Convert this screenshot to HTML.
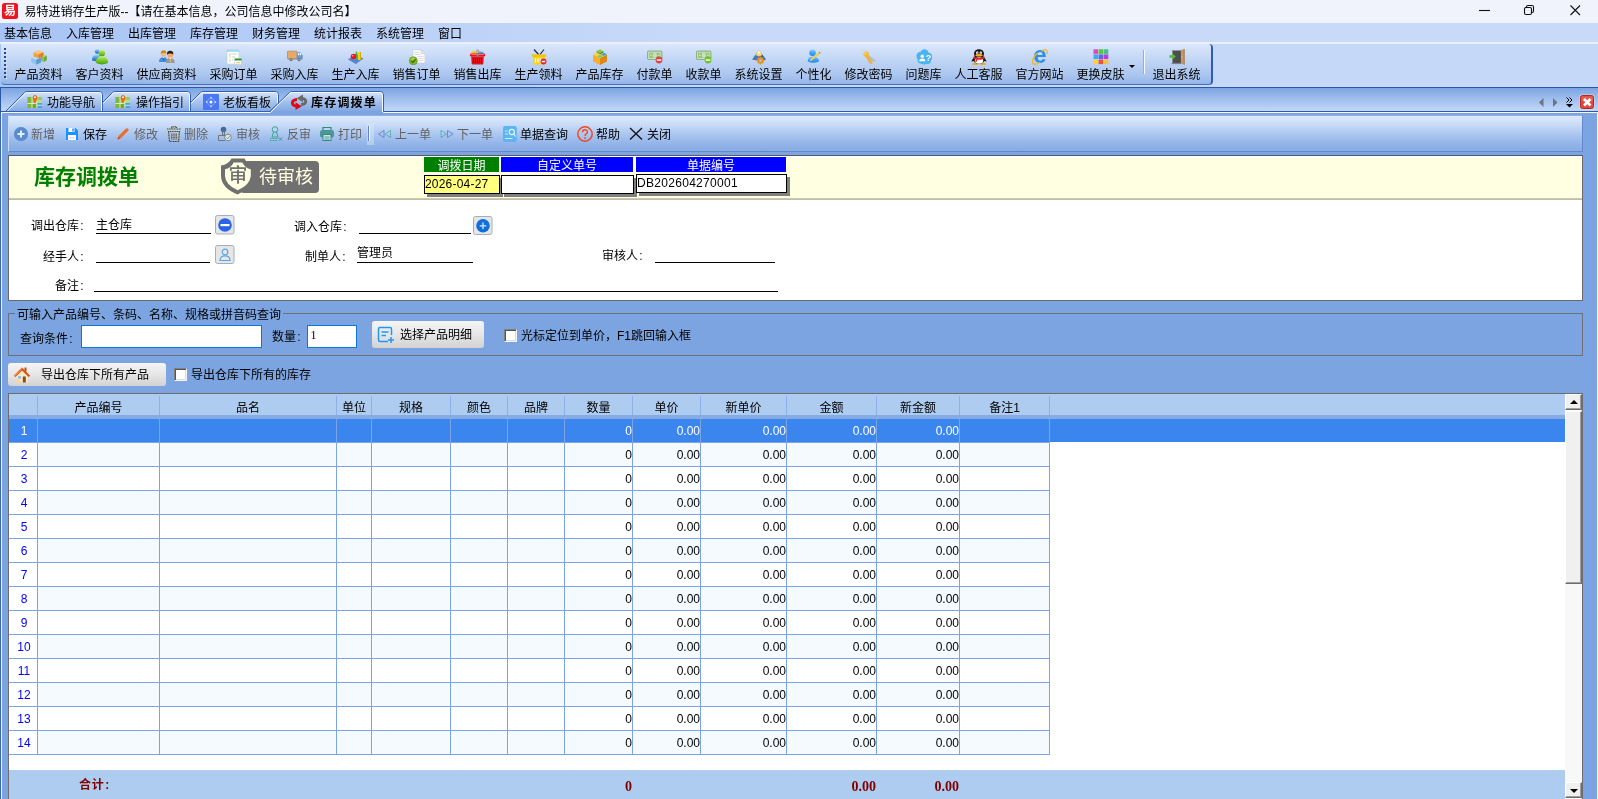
<!DOCTYPE html>
<html lang="zh-CN"><head><meta charset="utf-8"><title>易特进销存生产版</title>
<style>
html,body{margin:0;padding:0}
body{width:1598px;height:799px;overflow:hidden;position:relative;background:#7ca4e0;font:12px/12px "Liberation Sans","Noto Sans CJK SC",sans-serif;color:#000}
div,span{box-sizing:border-box}
.abs{position:absolute}
.t{position:absolute;white-space:nowrap;line-height:14px;height:14px;margin-top:1px}
.cl{display:inline-block;width:6px;text-align:center}
.c{text-align:center}
.r{text-align:right}
#titlebar{left:0;top:0;width:1598px;height:23px;background:#f0f3fb}
#menubar{left:0;top:23px;width:1598px;height:20px;background:linear-gradient(to right,#a8c4f5 0,#c8daf8 44%,#c8daf8 100%);border-bottom:1px solid #eaf1fd}
#toolrow{left:0;top:43px;width:1598px;height:44px;background:linear-gradient(to right,#a8c4f5 0,#c5d8f7 44%,#c5d8f7 100%);border-top:1px solid #e9f0fc}
#toolbar{left:1px;top:44px;width:1212px;height:41px;border-radius:0 4px 4px 4px;background:linear-gradient(#dbe7fb,#c4d8f6 35%,#a9c4ee 80%,#94b4e8);border-right:2px solid #2f5cb8;border-bottom:1px solid #4a72bc}
#tabstrip{left:0;top:87px;width:1598px;height:26px;background:linear-gradient(#2d56a5 0,#2d56a5 1px,#7ca4e1 1px,#9fbeed 45%,#bcd3f5 85%,#c8dcf9)}
.tb{position:absolute;top:68px;height:14px;line-height:14px;text-align:center;white-space:nowrap}
.ic{position:absolute}
.g{color:#626262}
</style></head><body><div id="root" style="position:absolute;left:0;top:0;width:1598px;height:799px;will-change:transform">

<div id="titlebar" class="abs"></div>
<div class="abs" style="left:2px;top:3px;width:16px;height:16px;border-radius:2.5px;background:#f0141e;color:#fff;font-size:12px;line-height:17px;text-align:center;font-weight:bold">易</div>
<div class="t" style="left:24.5px;top:4px">易特进销存生产版--【请在基本信息，公司信息中修改公司名】</div>
<svg class="abs" style="left:1470px;top:0" width="128" height="23" viewBox="0 0 128 23"><g stroke="#111" stroke-width="1.1" fill="none"><path d="M9 10.5H20"/><rect x="54.5" y="7.5" width="7" height="7" rx="1.5"/><path d="M56.5 7.5V6.8Q56.5 5.5 58 5.5H62Q63.5 5.5 63.5 7V11Q63.5 12.5 62 12.5H61.5"/><path d="M100.500 5.500L110 15M110 5.500L100.500 15"/></g></svg>
<div id="menubar" class="abs"></div>
<div class="t" style="left:4px;top:26px">基本信息</div>
<div class="t" style="left:66px;top:26px">入库管理</div>
<div class="t" style="left:128px;top:26px">出库管理</div>
<div class="t" style="left:190px;top:26px">库存管理</div>
<div class="t" style="left:252px;top:26px">财务管理</div>
<div class="t" style="left:314px;top:26px">统计报表</div>
<div class="t" style="left:376px;top:26px">系统管理</div>
<div class="t" style="left:438px;top:26px">窗口</div>
<div id="toolrow" class="abs"></div><div id="toolbar" class="abs"></div>
<div class="abs" style="left:4px;top:48px;width:2px;height:31px;background:repeating-linear-gradient(#27468c 0,#27468c 2px,transparent 2px,transparent 4px)"></div><div class="abs" style="left:5px;top:49px;width:2px;height:31px;background:repeating-linear-gradient(transparent 0,transparent 1px,#f2f7fe 1px,#f2f7fe 2px,transparent 2px,transparent 4px);clip-path:inset(0 0 0 1px)"></div>
<div class="tb" style="left:8px;width:61px">产品资料</div>
<div class="tb" style="left:69px;width:61px">客户资料</div>
<div class="tb" style="left:130px;width:73px">供应商资料</div>
<div class="tb" style="left:203px;width:61px">采购订单</div>
<div class="tb" style="left:264px;width:61px">采购入库</div>
<div class="tb" style="left:325px;width:61px">生产入库</div>
<div class="tb" style="left:386px;width:61px">销售订单</div>
<div class="tb" style="left:447px;width:61px">销售出库</div>
<div class="tb" style="left:508px;width:61px">生产领料</div>
<div class="tb" style="left:569px;width:61px">产品库存</div>
<div class="tb" style="left:630px;width:49px">付款单</div>
<div class="tb" style="left:679px;width:49px">收款单</div>
<div class="tb" style="left:728px;width:61px">系统设置</div>
<div class="tb" style="left:789px;width:49px">个性化</div>
<div class="tb" style="left:838px;width:61px">修改密码</div>
<div class="tb" style="left:899px;width:49px">问题库</div>
<div class="tb" style="left:948px;width:61px">人工客服</div>
<div class="tb" style="left:1009px;width:61px">官方网站</div>
<div class="tb" style="left:1070px;width:61px">更换皮肤</div>
<div class="abs" style="left:1129px;top:65px;width:0;height:0;border-left:3px solid transparent;border-right:3px solid transparent;border-top:3px solid #000"></div>
<div class="abs" style="left:1143px;top:50px;width:1px;height:24px;background:#8fade2"></div><div class="abs" style="left:1144px;top:50px;width:1px;height:24px;background:#f6f9fe"></div>
<div class="tb" style="left:1146px;width:61px">退出系统</div>
<svg width="0" height="0" style="position:absolute"><defs><linearGradient id="gGrn" x1="0" y1="0" x2="0" y2="1"><stop offset="0" stop-color="#c4f07e"/><stop offset="0.45" stop-color="#7ed02a"/><stop offset="1" stop-color="#4a9c10"/></linearGradient><linearGradient id="gBlu" x1="0" y1="0" x2="0" y2="1"><stop offset="0" stop-color="#a8d8fc"/><stop offset="0.5" stop-color="#4a94e4"/><stop offset="1" stop-color="#2a68c4"/></linearGradient><linearGradient id="gBl2" x1="0" y1="0" x2="0" y2="1"><stop offset="0" stop-color="#8cd0ff"/><stop offset="0.5" stop-color="#40a4f8"/><stop offset="1" stop-color="#2a88e4"/></linearGradient></defs></svg>
<svg class="ic" style="left:31px;top:49px" width="16" height="16" viewBox="0 0 16 16"><path d="M10 7L12.800 8V13L10 12Z" fill="#8cc152"/><path d="M12.800 8L15.800 6.500V11.200L12.800 13Z" fill="#6ea637"/><path d="M10 7L13 5.500L15.800 6.500L12.800 8Z" fill="#b4dc86"/>
<path d="M0.300 8.500L5.200 10.500V15.800L0.300 13.300Z" fill="#8cc4f0"/><path d="M5.200 10.500L10 8.500V13.500L5.200 15.800Z" fill="#5a9bd8"/><path d="M0.300 8.500L5 6.800L10 8.500L5.200 10.500Z" fill="#c0e0f8"/>
<path d="M2.500 3.200L7.500 5.200V9.500L2.500 7.500Z" fill="#f5a040"/><path d="M7.500 5.200L12.500 3V7.300L7.500 9.500Z" fill="#e07f1c"/><path d="M2.500 3.200L7.500 1L12.500 3L7.500 5.200Z" fill="#fac27a"/></svg>
<svg class="ic" style="left:92px;top:49px" width="16" height="16" viewBox="0 0 16 16"><circle cx="5.200" cy="2.600" r="2.400" fill="url(#gBlu)"/><path d="M0 11.500C0 7 2 5.500 5 5.500S8 7 8 11.500Q4 13 0 11.500Z" fill="url(#gBlu)"/>
<circle cx="9.800" cy="4.300" r="3.200" fill="url(#gGrn)"/><path d="M3.800 14C3.800 9.500 6.500 7.300 9.900 7.300S16.100 9.500 16.100 14Q10 16.800 3.800 14Z" fill="url(#gGrn)"/></svg>
<svg class="ic" style="left:159px;top:49px" width="16" height="16" viewBox="0 0 16 16"><circle cx="4.600" cy="5" r="2.700" fill="#f8b878"/><path d="M1.800 4.800C1.600 2 3 1.300 4.600 1.300S7.400 2 7.400 4.300C6 3.500 3.500 3.400 1.800 4.800Z" fill="#c48a22"/><path d="M-0.100 13C-0.100 10 2 8 4.600 8S8.200 9.500 8.200 13Z" fill="#3f8ee0"/><path d="M4.600 8.200L3.900 10L4.600 12.500L5.300 10Z" fill="#d22"/><path d="M3.600 8.100L4.600 9.200L5.600 8.100Z" fill="#fff"/>
<circle cx="11.200" cy="5.700" r="3" fill="#f9a868"/><path d="M8.100 5.500C7.900 2.500 9.500 1.800 11.200 1.800S14.500 2.500 14.300 5.500C13 4 9.500 4 8.100 5.500Z" fill="#1e1e1e"/><path d="M6.800 14C6.800 10.800 8.700 9 11.300 9S15.800 10.800 15.800 14Z" fill="#9a9a9a"/><path d="M10.200 9.100L11.300 10.500L12.400 9.100Z" fill="#fff"/><path d="M11.300 10.200L10.700 12L11.300 14L11.900 12Z" fill="#f0cc1e"/></svg>
<svg class="ic" style="left:226px;top:49px" width="16" height="16" viewBox="0 0 16 16"><rect x="1" y="0.800" width="12" height="14.200" fill="#fdfeff" stroke="#c2d0e0" stroke-width="0.700"/><rect x="1" y="0.800" width="12" height="2" fill="#9fd8f2"/><path d="M3 5H5.500M3 8H5M3 11H5" stroke="#f4cf8a" stroke-width="1"/><path d="M6.500 5H10.500M6 8H9.500M6 11H7.500" stroke="#b4e3b6" stroke-width="1"/><path d="M3 6.500H4.500M3 12.500H4.500" stroke="#a9dcf2" stroke-width="0.800"/>
<rect x="8.800" y="9.600" width="6.800" height="6" fill="#fff" stroke="#b8b8b8" stroke-width="0.500"/><rect x="8.800" y="9.600" width="6.800" height="1.900" fill="#2a9a2a"/><path d="M10 13.700H14.500" stroke="#e4c87a" stroke-width="1.200"/></svg>
<svg class="ic" style="left:287px;top:49px" width="16" height="16" viewBox="0 0 16 16"><rect x="0.500" y="2.200" width="9.300" height="7.400" rx="0.500" fill="#f0b070" stroke="#a07850" stroke-width="0.600"/><path d="M1 4H9.300M1 6H9.300M1 8H9.300" stroke="#dc9a58" stroke-width="0.600"/><path d="M9.800 3.300H13.200L15.600 6.300V10H9.800Z" fill="#5aa0e4"/><rect x="10.800" y="4.200" width="1.300" height="2" fill="#fff"/><rect x="12.700" y="4.200" width="1.300" height="2" fill="#fff"/><rect x="0.500" y="9.600" width="15" height="0.900" fill="#8a8a8a"/><circle cx="4" cy="10.700" r="1.500" fill="#6a6a6a"/><circle cx="4" cy="10.700" r="0.600" fill="#c8c8c8"/><circle cx="12" cy="10.700" r="1.500" fill="#6a6a6a"/><circle cx="12" cy="10.700" r="0.600" fill="#c8c8c8"/><rect x="14.600" y="7.500" width="1" height="1" fill="#f0501e"/></svg>
<svg class="ic" style="left:348px;top:49px" width="16" height="16" viewBox="0 0 16 16"><path d="M0.500 10L7.500 6L15.500 9.500L8.500 14.500Z" fill="#4f86d8"/><path d="M0.500 10L8.500 14.500L8.500 15.300L0.500 10.800Z" fill="#3567b8"/><path d="M8 1.500L10 6V10H6.500Z" fill="#4caf50"/><rect x="10" y="3" width="3" height="8" fill="#f2d01e"/><rect x="12.200" y="3" width="0.800" height="8" fill="#c9a800"/><circle cx="5.500" cy="7.500" r="2.800" fill="#e8181e"/><circle cx="4.700" cy="6.600" r="0.900" fill="#ff8a8a"/></svg>
<svg class="ic" style="left:409px;top:49px" width="16" height="16" viewBox="0 0 16 16"><path d="M3.800 0.800H12L16 4.800V14H3.800Z" fill="#fbfbfb" stroke="#c0c5cc" stroke-width="0.600"/><path d="M12 0.800V4.800H16Z" fill="#e2e5ea" stroke="#c0c5cc" stroke-width="0.400"/><path d="M5.500 3.500H10.500M5.500 5.500H11M9 7.500H14.500M9 9.500H14.500M9.500 11.500H14.500" stroke="#d0d4da" stroke-width="0.800"/><circle cx="4.300" cy="11.800" r="4" fill="#86bc2a" stroke="#5e8e18" stroke-width="0.700"/><ellipse cx="4" cy="10" rx="2.600" ry="1.500" fill="#a8d84e" opacity="0.700"/><path d="M2.200 11.800L3.900 13.500L6.600 10.200" stroke="#356e08" stroke-width="1.400" fill="none"/></svg>
<svg class="ic" style="left:470px;top:49px" width="16" height="16" viewBox="0 0 16 16"><path d="M1 5.500L2 2.500Q4 1.500 6.500 2.500V5.500Z" fill="#f4c81e"/><path d="M8.600 5.500V2.800Q11 2 13 3L14 5.500Z" fill="#3fa8ea"/><rect x="6.600" y="0.200" width="2" height="7.800" rx="1" fill="#8a8a8a"/><rect x="7.100" y="0.500" width="0.700" height="7" fill="#d0d0d0"/><rect x="-0.200" y="4.600" width="15.400" height="3" rx="1.400" fill="#e8141e"/><rect x="0.800" y="5" width="13.400" height="0.900" rx="0.400" fill="#ff7070"/><path d="M1.200 7.400H13.800L13.300 14.800Q13.200 15.500 12.500 15.500H2.500Q1.800 15.500 1.700 14.800Z" fill="#e0121c"/><path d="M3.500 9V14M5.500 9V14M7.500 9V14M9.500 9V14M11.500 9V14" stroke="#8e060c" stroke-width="0.700"/><rect x="6.600" y="4.600" width="2" height="3.200" rx="0.800" fill="#8a8a8a"/></svg>
<svg class="ic" style="left:531px;top:49px" width="16" height="16" viewBox="0 0 16 16"><path d="M3 0.500L7.500 5.500M13 0.500L9 5.500" stroke="#1e2a3a" stroke-width="1.200"/><path d="M0.500 5.500H15.500L14.500 8H1.500Z" fill="#f5c400"/><path d="M2 8H14L13.500 15.500H2.500Z" fill="#f8d21a"/><path d="M4.500 9.500V13.500M7 9.500V13.500M9.500 9.500V13.500" stroke="#fff" stroke-width="1.300"/><circle cx="12.500" cy="12.500" r="3" fill="#e8282e"/><rect x="10.800" y="11.800" width="3.400" height="1.400" fill="#fff"/></svg>
<svg class="ic" style="left:592px;top:49px" width="16" height="16" viewBox="0 0 16 16"><path d="M1 5.500L8 9V16L1 12.500Z" fill="#f5ad32"/><path d="M8 9L15 5.500V12.500L8 16Z" fill="#dc8a14"/><path d="M1 5.500L8 2L15 5.500L8 9Z" fill="#f8cc68"/><path d="M4.500 2L8 0.200L11.500 2L8 3.800Z" fill="#8ad04a"/><path d="M4.500 2V3.500L8 5.300V3.800Z" fill="#62a82a"/><path d="M8 3.800V5.300L11.500 3.500V2Z" fill="#4e9420"/><path d="M8.800 5.500L12 3.800L15 5.300L11.800 7Z" fill="#3fa0ec"/><path d="M1.200 5.300L4.300 3.700L7.300 5.200L4.200 6.800Z" fill="#fad23c"/><path d="M4.800 7.300L8 5.700L11 7.200L8 8.800Z" fill="#7ed04a"/></svg>
<svg class="ic" style="left:647px;top:49px" width="16" height="16" viewBox="0 0 16 16"><rect x="0.500" y="2" width="14.500" height="8.500" rx="1" fill="#98c282" stroke="#7aa867" stroke-width="0.700"/><rect x="1.700" y="3.200" width="12.100" height="6.100" fill="none" stroke="#d9ecd0" stroke-width="0.800"/><ellipse cx="7.800" cy="6.200" rx="2.200" ry="2.500" fill="#c9e2bc"/><circle cx="3.800" cy="6.200" r="0.800" fill="#d9ecd0"/><circle cx="11.800" cy="6.200" r="0.800" fill="#d9ecd0"/><circle cx="12" cy="11" r="3.400" fill="#e84040"/><rect x="9.800" y="10.300" width="4.400" height="1.500" fill="#fff"/></svg>
<svg class="ic" style="left:696px;top:49px" width="16" height="16" viewBox="0 0 16 16"><rect x="0.500" y="2" width="14.500" height="8.500" rx="1" fill="#98c282" stroke="#7aa867" stroke-width="0.700"/><rect x="1.700" y="3.200" width="12.100" height="6.100" fill="none" stroke="#d9ecd0" stroke-width="0.800"/><ellipse cx="7.800" cy="6.200" rx="2.200" ry="2.500" fill="#c9e2bc"/><circle cx="3.800" cy="6.200" r="0.800" fill="#d9ecd0"/><circle cx="11.800" cy="6.200" r="0.800" fill="#d9ecd0"/><circle cx="12" cy="11" r="3.400" fill="#74c020"/><rect x="9.800" y="10.300" width="4.400" height="1.500" fill="#fff"/></svg>
<svg class="ic" style="left:751px;top:49px" width="16" height="16" viewBox="0 0 16 16"><path d="M8 1L1 10.500L8 12Z" fill="#4a78c0"/><path d="M8 1L15 10.500L8 12Z" fill="#3462a8"/><path d="M8 1L4.500 6L8 7.500L11.500 6Z" fill="#f5d66a"/><path d="M8 1L6 4L8 5L10 4Z" fill="#fff3c0"/><circle cx="9.500" cy="11.500" r="3" fill="#e8921e"/><path d="M9.500 7.500V15.500M5.500 11.500H13.500M6.700 8.700L12.300 14.300M12.300 8.700L6.700 14.300" stroke="#e8921e" stroke-width="1.600"/><circle cx="9.500" cy="11.500" r="1.200" fill="#a9c4ee"/></svg>
<svg class="ic" style="left:806px;top:49px" width="16" height="16" viewBox="0 0 16 16"><circle cx="6.500" cy="3.800" r="3.300" fill="url(#gBl2)"/><path d="M1.700 12.500C1.700 8.800 3.800 7.500 6.800 7.500S13 8.800 13 12.500Q7.500 15 1.700 12.500Z" fill="url(#gBl2)"/><path d="M4.500 10.200L12.800 3.300L14 4.700L5.700 11.500Z" fill="#f8cc3c"/><path d="M4.500 10.200L3.900 12L5.700 11.500Z" fill="#f4dcb0"/><path d="M12.800 3.300L13.500 2.700L14.700 4.100L14 4.700Z" fill="#e8504a"/></svg>
<svg class="ic" style="left:861px;top:49px" width="16" height="16" viewBox="0 0 16 16"><circle cx="3.200" cy="3" r="2.700" fill="none" stroke="#d4d8de" stroke-width="0.900"/><path d="M6 5L15 11.500L14.300 12.800L12.500 12L12 13L10.500 12.300L5 7Z" fill="#bcbcbc"/><circle cx="5.200" cy="5.200" r="2.700" fill="#f5bb3c"/><circle cx="4.300" cy="4.300" r="0.900" fill="#cfe0f8"/><path d="M6.500 6.200L11.800 14.500L10.500 15.300L9.500 14.300L8.800 14.800L4.500 7.500Z" fill="#f2b030"/></svg>
<svg class="ic" style="left:916px;top:49px" width="16" height="16" viewBox="0 0 16 16"><circle cx="8" cy="9.500" r="6" fill="#4ab4ee"/><circle cx="4.500" cy="7" r="4" fill="#4ab4ee"/><circle cx="8.500" cy="4.500" r="4.200" fill="#4ab4ee"/><circle cx="12.300" cy="8" r="4.200" fill="#4ab4ee"/><circle cx="5" cy="11" r="3.500" fill="#4ab4ee"/><circle cx="11.500" cy="11.500" r="3.500" fill="#4ab4ee"/><circle cx="6.300" cy="7.300" r="1.700" fill="#fff"/><path d="M3.200 12.300C3.200 10 4.700 9.400 6.300 9.400S9.400 10 9.400 12.300Z" fill="#fff"/><text x="9.800" y="12.300" font-family="Liberation Sans,sans-serif" font-size="9" font-weight="bold" fill="#fff">?</text></svg>
<svg class="ic" style="left:971px;top:49px" width="16" height="16" viewBox="0 0 16 16"><ellipse cx="4.200" cy="15" rx="3.200" ry="1.100" fill="#f5a81c"/><ellipse cx="11.800" cy="15" rx="3.200" ry="1.100" fill="#f5a81c"/><ellipse cx="8" cy="4.700" rx="5" ry="4.500" fill="#141414"/><ellipse cx="8" cy="10.500" rx="5.600" ry="4.600" fill="#141414"/><path d="M2.800 8L0.300 12.500L3 12ZM13.200 8L15.700 12.500L13 12Z" fill="#141414"/><ellipse cx="8" cy="11.500" rx="4.200" ry="3.300" fill="#fff"/><ellipse cx="6.300" cy="3.800" rx="1.200" ry="1.600" fill="#fff"/><ellipse cx="9.700" cy="3.800" rx="1.200" ry="1.600" fill="#fff"/><circle cx="6.700" cy="4" r="0.550" fill="#111"/><circle cx="9.300" cy="4" r="0.550" fill="#111"/><ellipse cx="8" cy="6.300" rx="3.600" ry="1.200" fill="#f8b01c"/><path d="M2.800 7.300C5.500 9.300 10.500 9.300 13.200 7.300L13.500 9.500C10.500 11.200 5.500 11.200 2.500 9.500Z" fill="#e8201e"/><path d="M4.800 10L4.300 13L6 12.500L6.200 10.500Z" fill="#e8201e"/></svg>
<svg class="ic" style="left:1032px;top:49px" width="16" height="16" viewBox="0 0 16 16"><text x="1.300" y="14.300" font-family="Liberation Sans,sans-serif" font-size="24" font-weight="bold" fill="#2a8eea">e</text><path d="M9.500 2.200C13.500 -0.500 16.500 0.800 14.800 5" fill="none" stroke="#f2b81e" stroke-width="1.300"/><path d="M6 3.800C0.500 8 -0.800 13.500 1.800 15C3.500 15.800 6 14.800 8 13.500" fill="none" stroke="#f2b81e" stroke-width="1.400"/></svg>
<svg class="ic" style="left:1093px;top:49px" width="16" height="16" viewBox="0 0 16 16"><rect x="0.5" y="0.3" width="4.600" height="4.600" fill="#e048c0"/><rect x="5.6" y="0.3" width="4.600" height="4.600" fill="#5cc43a"/><rect x="10.7" y="0.3" width="4.600" height="4.600" fill="#3cc488"/><rect x="0.5" y="5.4" width="4.600" height="4.600" fill="#48a4f0"/><rect x="5.6" y="5.4" width="4.600" height="4.600" fill="#5a68e8"/><rect x="10.7" y="5.4" width="4.600" height="4.600" fill="#b83ce0"/><rect x="0.5" y="10.5" width="4.600" height="4.600" fill="#f8d432"/><rect x="5.6" y="10.5" width="4.600" height="4.600" fill="#f05040"/><rect x="10.7" y="10.5" width="4.600" height="4.600" fill="#f8c040"/></svg>
<svg class="ic" style="left:1169px;top:49px" width="16" height="16" viewBox="0 0 16 16"><rect x="3.500" y="1.600" width="8.700" height="12.600" fill="#4e4e4e"/><rect x="3.500" y="1.600" width="8.700" height="12.600" fill="none" stroke="#8a8a8a" stroke-width="0.600"/><rect x="2.500" y="14.200" width="10" height="0.900" fill="#7a7a7a"/><path d="M12 1L15.500 0V15.800L12 14.500Z" fill="#c89a62"/><path d="M14.700 0.200L15.500 0V15.800L14.700 15.500Z" fill="#9a6a38"/><circle cx="13" cy="8" r="0.600" fill="#f5e07a"/><path d="M0.400 6.300H3.500V4.400L6.800 7.500L3.500 10.600V8.700H0.400Z" fill="#4cc23a"/></svg>
<div id="tabstrip" class="abs"></div>
<svg class="abs" style="left:0;top:86px" width="1598" height="30" viewBox="0 86 1598 30">
<defs>
<linearGradient id="tg" x1="0" y1="0" x2="0" y2="1"><stop offset="0" stop-color="#d6e5fa"/><stop offset="0.5" stop-color="#a9c5ef"/><stop offset="1" stop-color="#84a9e4"/></linearGradient>
<linearGradient id="ta" x1="0" y1="0" x2="0" y2="1"><stop offset="0" stop-color="#d9e6fa"/><stop offset="0.45" stop-color="#a6c3ef"/><stop offset="1" stop-color="#7ca4e0"/></linearGradient>
</defs>
<!-- bottom lines -->
<rect x="0" y="111" width="1598" height="1" fill="#2f5aa8"/><rect x="0" y="87" width="1" height="25" fill="#2d56a5"/>
<rect x="0" y="112" width="1598" height="1" fill="#f4f8fe"/>
<rect x="0" y="113" width="1598" height="3" fill="#7ca4e0"/>
<g transform="translate(1,0)">
<!-- tab3 -->
<path d="M180.500 111.500L199.500 92.500Q200.500 91.500 202 91.500H274Q277.500 91.500 277.500 95V111.500Z" fill="url(#tg)" stroke="#345fae"/>
<path d="M182.500 111L200.500 93Q201 92.500 202 92.500H274Q276.500 92.500 276.500 95V111" fill="none" stroke="#f2f7fe"/>
<!-- tab2 -->
<path d="M92.500 111.500L111.500 92.500Q112.500 91.500 114 91.500H186Q189.500 91.500 189.500 95V111.500Z" fill="url(#tg)" stroke="#345fae"/>
<path d="M94.500 111L112.500 93Q113 92.500 114 92.500H186Q188.500 92.500 188.500 95V111" fill="none" stroke="#f2f7fe"/>
<!-- tab1 -->
<path d="M4.500 111.500L23.500 92.500Q24.500 91.500 26 91.500H98Q101.500 91.500 101.500 95V111.500Z" fill="url(#tg)" stroke="#345fae"/>
<path d="M6.500 111L24.500 93Q25 92.500 26 92.500H98Q100.500 92.500 100.500 95V111" fill="none" stroke="#f2f7fe"/>
<!-- active tab4 -->
<path d="M268.500 112.500L288.500 92.500Q289.500 91.500 291 91.500H379Q382.500 91.500 382.500 95V112.500Z" fill="url(#ta)" stroke="none"/>
<path d="M268.500 111.500L288.500 92.500Q289.500 91.500 291 91.500H379Q382.500 91.500 382.500 95V111.500" fill="none" stroke="#345fae"/>
<rect x="270" y="111" width="112" height="2" fill="#7ca4e0"/><path d="M269.500 112.500L289 93Q289.500 92.500 291 92.500H379Q381.500 92.500 381.500 95V112" fill="none" stroke="#f2f7fe"/>
</g>
<!-- nav arrows -->
<g transform="translate(0,1)">
<path d="M1543.500 97L1539 101.500L1543.500 106Z" fill="#6a7485"/>
<path d="M1553 97L1557.500 101.500L1553 106Z" fill="#6a7485"/>
<path d="M1566.500 96.500L1569 99L1566.500 101.500M1569.500 96.500L1572 99L1569.500 101.500" fill="none" stroke="#000" stroke-width="1"/>
<path d="M1566 103H1573L1569.500 106.500Z" fill="#000"/>
<rect x="1579.500" y="93.500" width="15" height="15" rx="2.500" fill="#cfe6ff" opacity="0.700"/><rect x="1580.500" y="94.500" width="13" height="13" rx="2" fill="#e0483c" stroke="#b52a1e"/>
<rect x="1581.500" y="95.500" width="11.500" height="5" rx="1" fill="#ea6a5c" opacity="0.600"/>
<path d="M1584 98L1590.500 104.500M1590.500 98L1584 104.500" stroke="#fff" stroke-width="2.600"/>
</g>
</svg>
<div class="t" style="left:47px;top:95px">功能导航</div>
<div class="t" style="left:136px;top:95px">操作指引</div>
<div class="t" style="left:223px;top:95px">老板看板</div>
<div class="t" style="left:311px;top:95px;font-weight:bold;letter-spacing:1.2px">库存调拨单</div>
<!-- tab icons -->
<svg class="abs" style="left:27px;top:93px" width="16" height="16" viewBox="0 0 16 16"><rect x="0.500" y="4" width="14.500" height="11" fill="#9bcb5a"/><rect x="0.500" y="4" width="4.500" height="11" fill="#7db83a"/><rect x="5" y="10.500" width="4.500" height="4.500" fill="#6fa832"/><rect x="10" y="10" width="5" height="5" fill="#4aa3e0"/><rect x="10" y="7" width="5" height="3" fill="#b9dd8a"/><path d="M5 4V15M9.800 4V15M0.500 10.500H9.800" stroke="#e4f1cf" stroke-width="0.900"/><path d="M10 12.300H15" stroke="#e8f3ff" stroke-width="0.800"/><path d="M8 10.500C6.200 7 5.700 6 5.700 4.500A2.300 2.500 0 0 1 10.300 4.500C10.300 6 9.800 7 8 10.500Z" fill="#f0641a"/><circle cx="8" cy="4.300" r="1" fill="#fff"/></svg>
<svg class="abs" style="left:115px;top:93px" width="16" height="16" viewBox="0 0 16 16"><rect x="0.500" y="4" width="14.500" height="11" fill="#9bcb5a"/><rect x="0.500" y="4" width="4.500" height="11" fill="#7db83a"/><rect x="5" y="10.500" width="4.500" height="4.500" fill="#6fa832"/><rect x="10" y="10" width="5" height="5" fill="#4aa3e0"/><rect x="10" y="7" width="5" height="3" fill="#b9dd8a"/><path d="M5 4V15M9.800 4V15M0.500 10.500H9.800" stroke="#e4f1cf" stroke-width="0.900"/><path d="M10 12.300H15" stroke="#e8f3ff" stroke-width="0.800"/><path d="M8 10.500C6.200 7 5.700 6 5.700 4.500A2.300 2.500 0 0 1 10.300 4.500C10.300 6 9.800 7 8 10.500Z" fill="#f0641a"/><circle cx="8" cy="4.300" r="1" fill="#fff"/></svg>
<svg class="abs" style="left:203px;top:94px" width="16" height="16" viewBox="0 0 16 16"><rect x="0" y="0" width="16" height="16" rx="0.800" fill="#4a78f5"/><circle cx="8" cy="8" r="3.600" fill="none" stroke="#a9c0fb" stroke-width="1.400" opacity="0.400"/><circle cx="8" cy="8" r="1.500" fill="#fff"/><circle cx="8" cy="3.700" r="0.900" fill="#c9d8fd"/><circle cx="8" cy="12.300" r="0.900" fill="#c9d8fd"/><circle cx="3.700" cy="8" r="0.900" fill="#c9d8fd"/><circle cx="12.300" cy="8" r="0.900" fill="#c9d8fd"/></svg>
<svg class="abs" style="left:290px;top:94px" width="18" height="17" viewBox="290 94 18 17"><path d="M297 99.500C291.500 100 290.500 105 296 106.200" fill="none" stroke="#e00a12" stroke-width="2.800"/><path d="M295.500 102.300V110L301.800 106.200Z" fill="#e00a12"/><path d="M301 104.500C306.500 104.500 307.500 99.500 302.500 98.300" fill="none" stroke="#6a6a6a" stroke-width="2.800"/><path d="M303 94.500V102.200L296.700 98.300Z" fill="#6a6a6a"/></svg>

<div class="abs" style="left:0;top:112px;width:1px;height:687px;background:#3d66b2"></div>
<div class="abs" style="left:1px;top:112px;width:1px;height:687px;background:#eef4fd"></div>
<div class="abs" style="left:1597px;top:112px;width:1px;height:687px;background:#f4f8fe"></div>
<div class="abs" style="left:8px;top:115px;width:1575px;height:37px;border:1px solid #6488cc;border-top-color:#8fb0e6;border-left-color:#c9dbf7;background:linear-gradient(#deeafc,#c8dbf7 25%,#a8c4ef 55%,#8fb1e7 85%,#89ace5)"></div>
<div class="abs" style="left:367px;top:123px;width:7px;height:22px;background:rgba(220,232,250,0.45)"></div>
<div class="abs" style="left:368px;top:126px;width:1px;height:15px;background:#5f84c8"></div>
<div class="abs" style="left:369px;top:126px;width:1px;height:15px;background:#f4f8fe"></div>
<div class="t g" style="left:31px;top:127px">新增</div>
<div class="t" style="left:83px;top:127px">保存</div>
<div class="t g" style="left:134px;top:127px">修改</div>
<div class="t g" style="left:184px;top:127px">删除</div>
<div class="t g" style="left:236px;top:127px">审核</div>
<div class="t g" style="left:287px;top:127px">反审</div>
<div class="t g" style="left:338px;top:127px">打印</div>
<div class="t g" style="left:395px;top:127px">上一单</div>
<div class="t g" style="left:457px;top:127px">下一单</div>
<div class="t" style="left:520px;top:127px">单据查询</div>
<div class="t" style="left:596px;top:127px">帮助</div>
<div class="t" style="left:647px;top:127px">关闭</div>
<!-- action icons -->
<svg class="abs" style="left:13px;top:126px" width="16" height="16" viewBox="0 0 16 16"><circle cx="8" cy="8" r="7" fill="#3f78c4"/><circle cx="8" cy="8" r="7" fill="#a9c5ef" opacity="0.250"/><path d="M8 4.500V11.500M4.500 8H11.500" stroke="#e4eefc" stroke-width="2"/></svg>
<svg class="abs" style="left:65px;top:127px" width="14" height="14" viewBox="0 0 14 14"><path d="M1 1H10.500L13 3.500V13H1Z" fill="#1e90ff"/><rect x="3.500" y="1" width="6" height="4" fill="#fff"/><rect x="7.300" y="1.500" width="1.500" height="3" fill="#1e90ff"/><rect x="3" y="8" width="8" height="5" fill="#fff"/><rect x="4" y="10" width="6" height="1.500" fill="#cfe3fa"/></svg>
<svg class="abs" style="left:115px;top:126px" width="16" height="16" viewBox="0 0 16 16"><path d="M2.500 13.500L3.500 10L11 2.500Q12 1.800 13 2.800Q14 3.800 13.300 4.800L5.800 12.300Z" fill="#e8702a"/><path d="M2.500 13.500L3.300 10.500L5.500 12.600Z" fill="#c9541a"/></svg>
<svg class="abs" style="left:166px;top:125px" width="16" height="18" viewBox="0 0 16 18"><g fill="none" stroke="#5a4a1a" stroke-width="1.200" stroke-dasharray="1.200 0.500"><path d="M5.500 3.500V1.800H10.500V3.500"/><path d="M1 4H15"/><path d="M2.500 6.500L3.500 16.500H12.500L13.500 6.500Z"/><path d="M5.800 8.500V14.500M8 8.500V14.500M10.200 8.500V14.500"/></g></svg>
<svg class="abs" style="left:217px;top:126px" width="16" height="16" viewBox="0 0 16 16"><circle cx="6.500" cy="3.500" r="2.800" fill="#4a6a9a"/><path d="M5.500 6V9H7.500V6" fill="none" stroke="#777" stroke-width="1"/><path d="M1.500 14.500V9.500H9" fill="none" stroke="#777" stroke-width="1"/><path d="M1.500 14.500H8" stroke="#777" stroke-width="1"/><circle cx="11" cy="11.500" r="3.300" fill="#dfeafc" stroke="#777" stroke-width="0.900"/><path d="M9.500 11.500L10.700 12.700L12.700 10.300" stroke="#4a9a4a" stroke-width="1" fill="none"/></svg>
<svg class="abs" style="left:268px;top:125px" width="16" height="18" viewBox="0 0 16 18"><g fill="none" stroke="#3aa890" stroke-width="1"><circle cx="7" cy="4.500" r="2.800"/><path d="M5.500 7L4 12H10L8.500 7"/><path d="M2 13.500H11M2 15.500H9" stroke-dasharray="1 0.500"/><path d="M11 12.500L14 15.500M14 12.500L11 15.500" stroke="#3a9a98"/></g></svg>
<svg class="abs" style="left:319px;top:126px" width="16" height="16" viewBox="0 0 16 16"><path d="M4 4V1.500H12V4" fill="none" stroke="#2f8a78" stroke-width="1.200"/><rect x="1" y="4" width="14" height="7.500" rx="2.500" fill="#2f8a78"/><rect x="1" y="4" width="14" height="7.500" rx="2.500" fill="#a9c5ef" opacity="0.250"/><rect x="4" y="8.500" width="8" height="6" fill="#cfe0f4" stroke="#2f8a78" stroke-width="1"/><path d="M5.500 11H10.500M5.500 13H10.500" stroke="#2f8a78" stroke-width="0.800"/></svg>
<svg class="abs" style="left:377px;top:127px" width="16" height="14" viewBox="0 0 16 14"><path d="M7 3.500L1.500 7L7 10.500Z" fill="none" stroke="#5a8ac8" stroke-width="0.900"/><path d="M13.500 3.500L8 7L13.500 10.500Z" fill="none" stroke="#3aa890" stroke-width="0.900" stroke-dasharray="1.200 0.500"/></svg>
<svg class="abs" style="left:439px;top:127px" width="16" height="14" viewBox="0 0 16 14"><path d="M2 3.500L7.500 7L2 10.500Z" fill="none" stroke="#3aa890" stroke-width="0.900" stroke-dasharray="1.200 0.500"/><path d="M8.500 3.500L14 7L8.500 10.500Z" fill="none" stroke="#5a8ac8" stroke-width="0.900"/></svg>
<svg class="abs" style="left:503px;top:126px" width="14" height="16" viewBox="0 0 14 16"><rect x="0" y="0" width="13.800" height="16" rx="2" fill="#5cb4f2"/><circle cx="8.800" cy="6" r="2.600" fill="none" stroke="#e9f5ff" stroke-width="1.100"/><path d="M10.700 8L12.500 10.500" stroke="#e9f5ff" stroke-width="1.100"/><path d="M2 5H4.500M2 8H5M2 12.500H9.500" stroke="#d6ecfd" stroke-width="1"/></svg>
<svg class="abs" style="left:576px;top:125px" width="18" height="18" viewBox="0 0 18 18"><circle cx="9" cy="9" r="7.200" fill="none" stroke="#f0481e" stroke-width="1.500"/><path d="M6.500 7.200C6.500 4 11.500 4 11.500 7C11.500 8.800 9 8.800 9 11" fill="none" stroke="#f0481e" stroke-width="1.400"/><circle cx="9" cy="13.200" r="0.900" fill="#f0481e"/></svg>
<svg class="abs" style="left:629px;top:127px" width="14" height="14" viewBox="0 0 14 14"><path d="M1 1L13 12.500M13 1L1 12.500" stroke="#111" stroke-width="1.300"/></svg>

<div class="abs" style="left:8px;top:155px;width:1575px;height:146px;background:#fff;border:1px solid #6a6a6a;border-top-color:#5a5a5a"></div>
<div class="abs" style="left:9px;top:158px;width:1573px;height:41px;background:#ffffe1"></div>
<div class="abs" style="left:9px;top:198px;width:1573px;height:2px;background:linear-gradient(#d2cfba,#bab6a2)"></div>
<div class="t" style="left:34px;top:162px;height:28px;line-height:28px;font-size:21px;font-weight:bold;color:#008000">库存调拨单</div>
<svg class="abs" style="left:219px;top:157px" width="102" height="39" viewBox="219 157 102 39"><rect x="240" y="161" width="79" height="32" rx="4" fill="#707070"/><path d="M221 165.500Q228.500 164.500 231.500 158.500H244.500Q247.500 164.500 252 165.500V176Q251.500 188 237.500 194.500Q221.500 188 221 176Z" fill="#707070"/><path d="M225 169.300Q231 168 233.700 162.500H242.300Q245 168 250.800 169.300V176Q250 185 237.700 190.300Q225.500 185 225 176Z" fill="#ffffe1"/></svg>
<div class="t" style="left:228.5px;top:162.5px;height:24px;line-height:24px;font-size:19px;font-weight:500;color:#707070">审</div>
<div class="t" style="left:259px;top:164px;height:24px;line-height:24px;font-size:18px;color:#ffffe1">待审核</div>
<div class="abs c" style="left:424px;top:157px;width:75px;height:15px;background:#008000;color:#fff;line-height:18px;overflow:hidden;white-space:nowrap">调拨日期</div>
<div class="abs c" style="left:501px;top:157px;width:132px;height:15px;background:#0000ff;color:#fff;line-height:18px;overflow:hidden;white-space:nowrap">自定义单号</div>
<div class="abs c" style="left:636px;top:157px;width:150px;height:15px;background:#0000ff;color:#fff;line-height:18px;overflow:hidden;white-space:nowrap">单据编号</div>
<div class="abs" style="left:427px;top:178px;width:76px;height:19px;background:#808080"></div>
<div class="abs" style="left:424px;top:175px;width:76px;height:19px;background:#ffff80;border:1px solid #000;line-height:17px;padding-left:0;white-space:nowrap;font-size:12px;letter-spacing:0.2px">2026-04-27</div>
<div class="abs" style="left:504px;top:178px;width:133px;height:19px;background:#808080"></div>
<div class="abs" style="left:501px;top:175px;width:133px;height:19px;background:#fff;border:1px solid #000;line-height:17px;padding-left:0;white-space:nowrap;font-size:12px;letter-spacing:0px"></div>
<div class="abs" style="left:639px;top:177px;width:151px;height:19px;background:#808080"></div>
<div class="abs" style="left:636px;top:174px;width:151px;height:19px;background:#fff;border:1px solid #000;line-height:16px;padding-left:0;white-space:nowrap;font-size:12px;letter-spacing:0.3px">DB202604270001</div>
<div class="t" style="left:31px;top:218px;">调出仓库<span class="cl">:</span></div>
<div class="t" style="left:96px;top:217px;">主仓库</div>
<div class="abs" style="left:96px;top:233px;width:115px;height:1px;background:#000"></div>
<div class="t" style="left:294px;top:219px;">调入仓库<span class="cl">:</span></div>
<div class="abs" style="left:359px;top:233px;width:112px;height:1px;background:#000"></div>
<div class="t" style="left:43px;top:249px;">经手人<span class="cl">:</span></div>
<div class="abs" style="left:96px;top:262px;width:114px;height:1px;background:#000"></div>
<div class="t" style="left:305px;top:249px;">制单人<span class="cl">:</span></div>
<div class="t" style="left:357px;top:245px;">管理员</div>
<div class="abs" style="left:357px;top:262px;width:116px;height:1px;background:#000"></div>
<div class="t" style="left:602px;top:248px;">审核人<span class="cl">:</span></div>
<div class="abs" style="left:655px;top:262px;width:120px;height:1px;background:#000"></div>
<div class="t" style="left:55px;top:278px;">备注<span class="cl">:</span></div>
<div class="abs" style="left:94px;top:291px;width:684px;height:1px;background:#000"></div>
<svg class="abs" style="left:214.5px;top:215px" width="20" height="20" viewBox="0 0 20 20"><rect x="0.500" y="0.500" width="18.500" height="18.500" rx="2" fill="#e6e6e6" stroke="#a3aec4"/><circle cx="10" cy="10" r="6.800" fill="#2a63e8"/><rect x="5.500" y="9" width="9" height="2.200" fill="#fff"/></svg>
<svg class="abs" style="left:473px;top:216px" width="20" height="20" viewBox="0 0 20 20"><rect x="0.500" y="0.500" width="18.500" height="18" rx="2" fill="#e6e6e6" stroke="#a3aec4"/><circle cx="10" cy="9.800" r="6.800" fill="#0f6fdc"/><path d="M10 6.500V13M6.700 9.800H13.300" stroke="#dbeafc" stroke-width="1.300"/></svg>
<svg class="abs" style="left:214.5px;top:245px" width="20" height="20" viewBox="0 0 20 20"><rect x="0.500" y="0.500" width="18.500" height="18" rx="2" fill="#e6e6e6" stroke="#a3aec4"/><circle cx="10" cy="7" r="2.800" fill="none" stroke="#5aa7e8" stroke-width="1.200"/><path d="M5 15.500C5 11.500 7.500 10.800 10 10.800S15 11.500 15 15.500Z" fill="none" stroke="#5aa7e8" stroke-width="1.200"/></svg>
<div class="abs" style="left:8px;top:313px;width:1575px;height:43px;border:1px solid #6d7076"></div>
<div class="t" style="left:15px;top:307px;background:#7ca4e0;padding:0 2px">可输入产品编号、条码、名称、规格或拼音码查询</div>
<div class="t" style="left:20px;top:331px;">查询条件<span class="cl">:</span></div>
<div class="abs" style="left:81px;top:325px;width:181px;height:23px;background:#fff;border:1px solid #0a78d7"></div>
<div class="t" style="left:272px;top:329px;">数量<span class="cl">:</span></div>
<div class="abs" style="left:307px;top:325px;width:50px;height:23px;background:#fff;border:1px solid #0a78d7;font-size:12px;line-height:19px;padding-left:2.5px;font-family:'Liberation Serif',serif">1</div>
<div class="abs" style="left:372px;top:321px;width:112px;height:27px;background:linear-gradient(#f5f5f5,#e6e6e6 50%,#d2d2d2);border-radius:3px"></div>
<svg class="abs" style="left:377px;top:326px" width="18" height="18" viewBox="0 0 18 18"><path d="M11 15.500H3Q1.500 15.500 1.500 14V3Q1.500 1.500 3 1.500H13Q14.500 1.500 14.500 3V9" fill="none" stroke="#1e96fa" stroke-width="1.500"/><path d="M4.500 6H11.500M4.500 9.500H9" stroke="#1e96fa" stroke-width="1.500"/><path d="M14 11V17M11 14H17" stroke="#1e96fa" stroke-width="1.500"/></svg>
<div class="t" style="left:400px;top:327px;">选择产品明细</div>
<div class="abs" style="left:504px;top:329px;width:13px;height:13px;background:#fff;border:1px solid;border-color:#808080 #f4f4f4 #f4f4f4 #808080;box-shadow:inset 1px 1px 0 #555,inset -1px -1px 0 #dcdcdc"></div>
<div class="t" style="left:521px;top:328px;">光标定位到单价，F1跳回输入框</div>
<div class="abs" style="left:8px;top:363px;width:158px;height:23px;background:linear-gradient(#f5f5f5,#e6e6e6 50%,#d2d2d2);border-radius:3px"></div>
<svg class="abs" style="left:13px;top:366px" width="18" height="18" viewBox="0 0 18 18"><rect x="11.500" y="1.500" width="2" height="4" fill="#b5501a"/><path d="M3.500 9.500L9 4L14.500 9.500V16.500H3.500Z" fill="#fbe9c4"/><path d="M3.500 12L9 16.500H3.500Z" fill="#f3d59c"/><path d="M0.800 9.800L9 1.500L17.200 9.800L15.500 11L9 4.500L2.500 11Z" fill="#d8531a"/><path d="M0.800 9.800L9 1.500L9 3L2 10.500Z" fill="#f08a3a"/><rect x="9.800" y="10.500" width="3" height="6" fill="#8c4a1e"/><rect x="5" y="10" width="3" height="2.800" fill="#8fc4ea"/></svg>
<div class="t" style="left:41px;top:367px;">导出仓库下所有产品</div>
<div class="abs" style="left:174px;top:368px;width:13px;height:13px;background:#fff;border:1px solid;border-color:#808080 #f4f4f4 #f4f4f4 #808080;box-shadow:inset 1px 1px 0 #555,inset -1px -1px 0 #dcdcdc"></div>
<div class="t" style="left:191px;top:367px;">导出仓库下所有的库存</div>
<div class="abs" style="left:8px;top:393px;width:1575px;height:410px;background:#fff;border:1px solid #6d6d6d;border-right:2px solid #6d6d6d"></div>
<div class="abs" style="left:9px;top:394px;width:1556px;height:21px;background:#aecbf0"></div>
<div class="abs" style="left:9px;top:415px;width:1556px;height:4px;background:#86abe4"></div>
<div class="abs" style="left:9px;top:419px;width:1556px;height:23px;background:#3b86ee"></div>
<div class="abs" style="left:38px;top:443px;width:1011px;height:23px;background:#f5faff"></div>
<div class="abs" style="left:38px;top:491px;width:1011px;height:23px;background:#f5faff"></div>
<div class="abs" style="left:38px;top:539px;width:1011px;height:23px;background:#f5faff"></div>
<div class="abs" style="left:38px;top:587px;width:1011px;height:23px;background:#f5faff"></div>
<div class="abs" style="left:38px;top:635px;width:1011px;height:23px;background:#f5faff"></div>
<div class="abs" style="left:38px;top:683px;width:1011px;height:23px;background:#f5faff"></div>
<div class="abs" style="left:38px;top:731px;width:1011px;height:23px;background:#f5faff"></div>
<div class="abs" style="left:9px;top:442px;width:1041px;height:1px;background:#7ca3e4"></div>
<div class="abs" style="left:9px;top:466px;width:1041px;height:1px;background:#7ca3e4"></div>
<div class="abs" style="left:9px;top:490px;width:1041px;height:1px;background:#7ca3e4"></div>
<div class="abs" style="left:9px;top:514px;width:1041px;height:1px;background:#7ca3e4"></div>
<div class="abs" style="left:9px;top:538px;width:1041px;height:1px;background:#7ca3e4"></div>
<div class="abs" style="left:9px;top:562px;width:1041px;height:1px;background:#7ca3e4"></div>
<div class="abs" style="left:9px;top:586px;width:1041px;height:1px;background:#7ca3e4"></div>
<div class="abs" style="left:9px;top:610px;width:1041px;height:1px;background:#7ca3e4"></div>
<div class="abs" style="left:9px;top:634px;width:1041px;height:1px;background:#7ca3e4"></div>
<div class="abs" style="left:9px;top:658px;width:1041px;height:1px;background:#7ca3e4"></div>
<div class="abs" style="left:9px;top:682px;width:1041px;height:1px;background:#7ca3e4"></div>
<div class="abs" style="left:9px;top:706px;width:1041px;height:1px;background:#7ca3e4"></div>
<div class="abs" style="left:9px;top:730px;width:1041px;height:1px;background:#7ca3e4"></div>
<div class="abs" style="left:9px;top:754px;width:1041px;height:1px;background:#7ca3e4"></div>
<div class="abs" style="left:37px;top:396px;width:1px;height:19px;background:#8fb0e6"></div>
<div class="abs" style="left:37px;top:419px;width:1px;height:336px;background:#7ca3e4"></div>
<div class="abs" style="left:159px;top:396px;width:1px;height:19px;background:#8fb0e6"></div>
<div class="abs" style="left:159px;top:419px;width:1px;height:336px;background:#7ca3e4"></div>
<div class="abs" style="left:336px;top:396px;width:1px;height:19px;background:#8fb0e6"></div>
<div class="abs" style="left:336px;top:419px;width:1px;height:336px;background:#7ca3e4"></div>
<div class="abs" style="left:371px;top:396px;width:1px;height:19px;background:#8fb0e6"></div>
<div class="abs" style="left:371px;top:419px;width:1px;height:336px;background:#7ca3e4"></div>
<div class="abs" style="left:450px;top:396px;width:1px;height:19px;background:#8fb0e6"></div>
<div class="abs" style="left:450px;top:419px;width:1px;height:336px;background:#7ca3e4"></div>
<div class="abs" style="left:507px;top:396px;width:1px;height:19px;background:#8fb0e6"></div>
<div class="abs" style="left:507px;top:419px;width:1px;height:336px;background:#7ca3e4"></div>
<div class="abs" style="left:564px;top:396px;width:1px;height:19px;background:#8fb0e6"></div>
<div class="abs" style="left:564px;top:419px;width:1px;height:336px;background:#7ca3e4"></div>
<div class="abs" style="left:632px;top:396px;width:1px;height:19px;background:#8fb0e6"></div>
<div class="abs" style="left:632px;top:419px;width:1px;height:336px;background:#7ca3e4"></div>
<div class="abs" style="left:700px;top:396px;width:1px;height:19px;background:#8fb0e6"></div>
<div class="abs" style="left:700px;top:419px;width:1px;height:336px;background:#7ca3e4"></div>
<div class="abs" style="left:786px;top:396px;width:1px;height:19px;background:#8fb0e6"></div>
<div class="abs" style="left:786px;top:419px;width:1px;height:336px;background:#7ca3e4"></div>
<div class="abs" style="left:876px;top:396px;width:1px;height:19px;background:#8fb0e6"></div>
<div class="abs" style="left:876px;top:419px;width:1px;height:336px;background:#7ca3e4"></div>
<div class="abs" style="left:959px;top:396px;width:1px;height:19px;background:#8fb0e6"></div>
<div class="abs" style="left:959px;top:419px;width:1px;height:336px;background:#7ca3e4"></div>
<div class="abs" style="left:1049px;top:396px;width:1px;height:19px;background:#8fb0e6"></div>
<div class="abs" style="left:1049px;top:419px;width:1px;height:336px;background:#7ca3e4"></div>
<div class="t c" style="left:38px;top:400px;width:121px">产品编号</div>
<div class="t c" style="left:160px;top:400px;width:176px">品名</div>
<div class="t c" style="left:337px;top:400px;width:34px">单位</div>
<div class="t c" style="left:372px;top:400px;width:78px">规格</div>
<div class="t c" style="left:451px;top:400px;width:56px">颜色</div>
<div class="t c" style="left:508px;top:400px;width:56px">品牌</div>
<div class="t c" style="left:565px;top:400px;width:67px">数量</div>
<div class="t c" style="left:633px;top:400px;width:67px">单价</div>
<div class="t c" style="left:701px;top:400px;width:85px">新单价</div>
<div class="t c" style="left:787px;top:400px;width:89px">金额</div>
<div class="t c" style="left:877px;top:400px;width:82px">新金额</div>
<div class="t c" style="left:960px;top:400px;width:89px">备注1</div>
<div class="t c" style="left:10px;top:423px;width:28px;color:#fff">1</div>
<div class="t r" style="left:565px;top:423px;width:67px;color:#fff">0</div>
<div class="t r" style="left:633px;top:423px;width:67px;color:#fff">0.00</div>
<div class="t r" style="left:701px;top:423px;width:85px;color:#fff">0.00</div>
<div class="t r" style="left:787px;top:423px;width:89px;color:#fff">0.00</div>
<div class="t r" style="left:877px;top:423px;width:82px;color:#fff">0.00</div>
<div class="t c" style="left:10px;top:447px;width:28px;color:#0000ff">2</div>
<div class="t r" style="left:565px;top:447px;width:67px;color:#000">0</div>
<div class="t r" style="left:633px;top:447px;width:67px;color:#000">0.00</div>
<div class="t r" style="left:701px;top:447px;width:85px;color:#000">0.00</div>
<div class="t r" style="left:787px;top:447px;width:89px;color:#000">0.00</div>
<div class="t r" style="left:877px;top:447px;width:82px;color:#000">0.00</div>
<div class="t c" style="left:10px;top:471px;width:28px;color:#0000ff">3</div>
<div class="t r" style="left:565px;top:471px;width:67px;color:#000">0</div>
<div class="t r" style="left:633px;top:471px;width:67px;color:#000">0.00</div>
<div class="t r" style="left:701px;top:471px;width:85px;color:#000">0.00</div>
<div class="t r" style="left:787px;top:471px;width:89px;color:#000">0.00</div>
<div class="t r" style="left:877px;top:471px;width:82px;color:#000">0.00</div>
<div class="t c" style="left:10px;top:495px;width:28px;color:#0000ff">4</div>
<div class="t r" style="left:565px;top:495px;width:67px;color:#000">0</div>
<div class="t r" style="left:633px;top:495px;width:67px;color:#000">0.00</div>
<div class="t r" style="left:701px;top:495px;width:85px;color:#000">0.00</div>
<div class="t r" style="left:787px;top:495px;width:89px;color:#000">0.00</div>
<div class="t r" style="left:877px;top:495px;width:82px;color:#000">0.00</div>
<div class="t c" style="left:10px;top:519px;width:28px;color:#0000ff">5</div>
<div class="t r" style="left:565px;top:519px;width:67px;color:#000">0</div>
<div class="t r" style="left:633px;top:519px;width:67px;color:#000">0.00</div>
<div class="t r" style="left:701px;top:519px;width:85px;color:#000">0.00</div>
<div class="t r" style="left:787px;top:519px;width:89px;color:#000">0.00</div>
<div class="t r" style="left:877px;top:519px;width:82px;color:#000">0.00</div>
<div class="t c" style="left:10px;top:543px;width:28px;color:#0000ff">6</div>
<div class="t r" style="left:565px;top:543px;width:67px;color:#000">0</div>
<div class="t r" style="left:633px;top:543px;width:67px;color:#000">0.00</div>
<div class="t r" style="left:701px;top:543px;width:85px;color:#000">0.00</div>
<div class="t r" style="left:787px;top:543px;width:89px;color:#000">0.00</div>
<div class="t r" style="left:877px;top:543px;width:82px;color:#000">0.00</div>
<div class="t c" style="left:10px;top:567px;width:28px;color:#0000ff">7</div>
<div class="t r" style="left:565px;top:567px;width:67px;color:#000">0</div>
<div class="t r" style="left:633px;top:567px;width:67px;color:#000">0.00</div>
<div class="t r" style="left:701px;top:567px;width:85px;color:#000">0.00</div>
<div class="t r" style="left:787px;top:567px;width:89px;color:#000">0.00</div>
<div class="t r" style="left:877px;top:567px;width:82px;color:#000">0.00</div>
<div class="t c" style="left:10px;top:591px;width:28px;color:#0000ff">8</div>
<div class="t r" style="left:565px;top:591px;width:67px;color:#000">0</div>
<div class="t r" style="left:633px;top:591px;width:67px;color:#000">0.00</div>
<div class="t r" style="left:701px;top:591px;width:85px;color:#000">0.00</div>
<div class="t r" style="left:787px;top:591px;width:89px;color:#000">0.00</div>
<div class="t r" style="left:877px;top:591px;width:82px;color:#000">0.00</div>
<div class="t c" style="left:10px;top:615px;width:28px;color:#0000ff">9</div>
<div class="t r" style="left:565px;top:615px;width:67px;color:#000">0</div>
<div class="t r" style="left:633px;top:615px;width:67px;color:#000">0.00</div>
<div class="t r" style="left:701px;top:615px;width:85px;color:#000">0.00</div>
<div class="t r" style="left:787px;top:615px;width:89px;color:#000">0.00</div>
<div class="t r" style="left:877px;top:615px;width:82px;color:#000">0.00</div>
<div class="t c" style="left:10px;top:639px;width:28px;color:#0000ff">10</div>
<div class="t r" style="left:565px;top:639px;width:67px;color:#000">0</div>
<div class="t r" style="left:633px;top:639px;width:67px;color:#000">0.00</div>
<div class="t r" style="left:701px;top:639px;width:85px;color:#000">0.00</div>
<div class="t r" style="left:787px;top:639px;width:89px;color:#000">0.00</div>
<div class="t r" style="left:877px;top:639px;width:82px;color:#000">0.00</div>
<div class="t c" style="left:10px;top:663px;width:28px;color:#0000ff">11</div>
<div class="t r" style="left:565px;top:663px;width:67px;color:#000">0</div>
<div class="t r" style="left:633px;top:663px;width:67px;color:#000">0.00</div>
<div class="t r" style="left:701px;top:663px;width:85px;color:#000">0.00</div>
<div class="t r" style="left:787px;top:663px;width:89px;color:#000">0.00</div>
<div class="t r" style="left:877px;top:663px;width:82px;color:#000">0.00</div>
<div class="t c" style="left:10px;top:687px;width:28px;color:#0000ff">12</div>
<div class="t r" style="left:565px;top:687px;width:67px;color:#000">0</div>
<div class="t r" style="left:633px;top:687px;width:67px;color:#000">0.00</div>
<div class="t r" style="left:701px;top:687px;width:85px;color:#000">0.00</div>
<div class="t r" style="left:787px;top:687px;width:89px;color:#000">0.00</div>
<div class="t r" style="left:877px;top:687px;width:82px;color:#000">0.00</div>
<div class="t c" style="left:10px;top:711px;width:28px;color:#0000ff">13</div>
<div class="t r" style="left:565px;top:711px;width:67px;color:#000">0</div>
<div class="t r" style="left:633px;top:711px;width:67px;color:#000">0.00</div>
<div class="t r" style="left:701px;top:711px;width:85px;color:#000">0.00</div>
<div class="t r" style="left:787px;top:711px;width:89px;color:#000">0.00</div>
<div class="t r" style="left:877px;top:711px;width:82px;color:#000">0.00</div>
<div class="t c" style="left:10px;top:735px;width:28px;color:#0000ff">14</div>
<div class="t r" style="left:565px;top:735px;width:67px;color:#000">0</div>
<div class="t r" style="left:633px;top:735px;width:67px;color:#000">0.00</div>
<div class="t r" style="left:701px;top:735px;width:85px;color:#000">0.00</div>
<div class="t r" style="left:787px;top:735px;width:89px;color:#000">0.00</div>
<div class="t r" style="left:877px;top:735px;width:82px;color:#000">0.00</div>
<div class="abs" style="left:9px;top:770px;width:1556px;height:29px;background:#aecbf0"></div>
<div class="t" style="left:79px;top:777px;font-weight:bold;color:#800000;letter-spacing:0.8px">合计<span class="cl">:</span></div>
<div class="t r" style="left:565px;top:778.5px;width:67px;font-family:'Liberation Serif',serif;font-weight:bold;color:#800000;font-size:14px">0</div>
<div class="t r" style="left:787px;top:778.5px;width:89px;font-family:'Liberation Serif',serif;font-weight:bold;color:#800000;font-size:14px">0.00</div>
<div class="t r" style="left:877px;top:778.5px;width:82px;font-family:'Liberation Serif',serif;font-weight:bold;color:#800000;font-size:14px">0.00</div>
<div class="abs" style="left:1565px;top:394px;width:17px;height:405px;background:#f8f8f8"></div>
<div class="abs" style="left:1565px;top:394px;width:17px;height:16px;background:#f0f0f0;border:1px solid;border-color:#fff #6d6d6d #6d6d6d #fff;box-shadow:inset -1px -1px 0 #a0a0a0"></div>
<div class="abs" style="left:1569.5px;top:399.5px;width:0;height:0;border-left:4px solid transparent;border-right:4px solid transparent;border-bottom:4.5px solid #000"></div>
<div class="abs" style="left:1565px;top:411px;width:17px;height:173px;background:#f0f0f0;border:1px solid;border-color:#fff #6d6d6d #6d6d6d #fff;box-shadow:inset -1px -1px 0 #a0a0a0"></div>
<div class="abs" style="left:1565px;top:782px;width:17px;height:16px;background:#f0f0f0;border:1px solid;border-color:#fff #6d6d6d #6d6d6d #fff;box-shadow:inset -1px -1px 0 #a0a0a0"></div>
<div class="abs" style="left:1569.5px;top:789px;width:0;height:0;border-left:4px solid transparent;border-right:4px solid transparent;border-top:4.5px solid #000"></div>
</div></body></html>
